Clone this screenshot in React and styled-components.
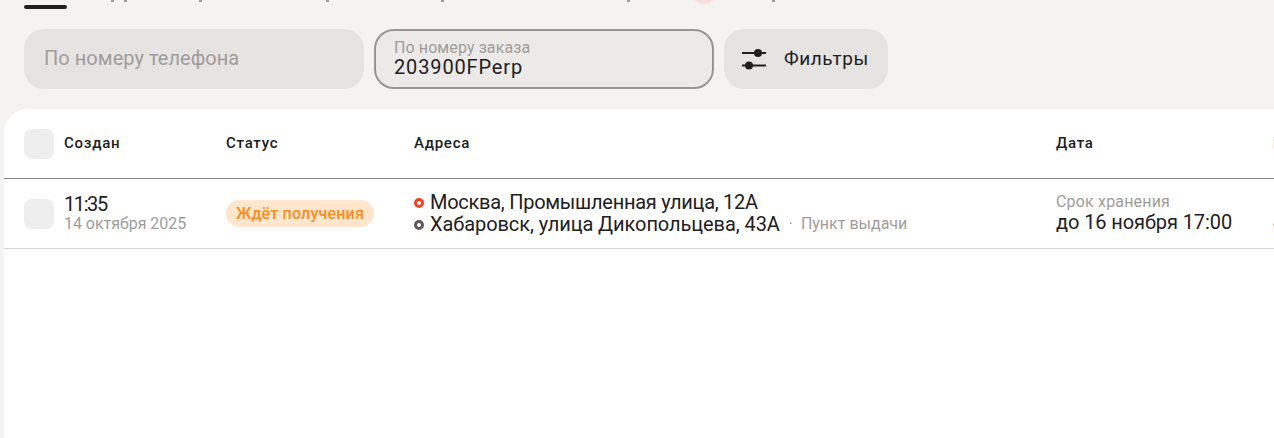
import React from "react";
import styled, { createGlobalStyle } from "styled-components";

const Global = createGlobalStyle`
  html, body { margin: 0; padding: 0; background: #f4f3f1; }
  body { font-family: Roboto, "Noto Sans", sans-serif; color: #21201f; overflow: hidden; }
  * { box-sizing: border-box; }
`;
const Page = styled.div`
  width: 1274px; height: 438px; overflow: hidden; display: flex; flex-direction: column;
`;
const TabStrip = styled.div`
  height: 29px; flex: none; display: flex; align-items: flex-start; overflow: hidden;
`;
const TabIndicator = styled.div`
  width: 43px; height: 4px; margin: 5px 0 0 24px; border-radius: 2px; background: #21201f; flex: none;
`;
const TabTick = styled.span`
  width: 3px; height: 2px; flex: none; background: #9f9c98; margin-left: ${p => p.$gap}px;
`;
const TabBadge = styled.span`
  width: 26px; height: 26px; flex: none; margin-left: ${p => p.$gap}px; margin-top: -22px; border-radius: 50%; background: #f8dcd8; filter: blur(1px);
`;
const Filters = styled.div`
  height: 60px; flex: none; display: flex; gap: 10px; padding-left: 24px;
`;
const Field = styled.div`
  width: 340px; height: 60px; border-radius: 20px; background: ${p => p.$active ? "#ebeae8" : "#e5e4e2"};
  border: ${p => p.$active ? "2px solid #979695" : "none"};
  padding-left: ${p => p.$active ? "18px" : "20px"};
  display: flex; flex-direction: column; justify-content: center;
`;
const Placeholder = styled.div`font-size: 20px; line-height: 24px; color: #a09d99; margin-top: -2px; letter-spacing: 0.04px;`;
const FieldLabel = styled.div`font-size: 16px; line-height: 16px; color: #a09d99; letter-spacing: 0.1px;`;
const FieldValue = styled.div`font-size: 20px; line-height: 22px; color: #21201f; letter-spacing: 0.86px;`;
const FilterButton = styled.div`
  width: 164px; height: 60px; border-radius: 20px; background: #e5e4e2; display: flex; align-items: center;
  padding-left: 18px; gap: 16px; font-size: 19px; color: #21201f; letter-spacing: 0.55px;
`;
const FilterLabel = styled.span`margin-top: -2px;`;
const Card = styled.div`
  flex: 1; margin: 20px 0 0 4px; background: #fff; border-radius: 24px 0 0 0; overflow: hidden;
`;
const columns = "30px 172px 188px 642px 217px 40px";
const HeadRow = styled.div`
  height: 70px; display: grid; grid-template-columns: ${columns}; padding-left: 20px; align-items: center;
  border-bottom: 1px solid #878787; font-size: 15px; font-weight: 500; white-space: nowrap; letter-spacing: 0.75px;
`;
const BodyRow = styled.div`
  height: 70px; display: grid; grid-template-columns: ${columns}; padding-left: 20px; align-items: center;
  border-bottom: 1px solid #d6d6d6; white-space: nowrap;
`;
const Check = styled.div`width: 30px; height: 30px; border-radius: 8px; background: #eeeeee;`;
const Cell = styled.div`padding-left: ${p => p.$pl || 0}px; margin-top: -1px;`;
const Primary = styled.div`font-size: 20px; line-height: 22px; letter-spacing: ${p => p.$sp || 0}px;`;
const Secondary = styled.div`font-size: 16px; line-height: 18px; color: #a09d99; letter-spacing: ${p => p.$sp ?? 0.1}px;`;
const Badge = styled.span`
  display: inline-flex; align-items: center; height: 27px; padding: 0 10px; border-radius: 14px;
  background: #ffe6cc; color: #fd8d1c; font-size: 16px; font-weight: 500; letter-spacing: 0.2px; width: 148px; margin-top: 1px;
`;
const AddressLine = styled.div`display: flex; align-items: center; font-size: 20px; line-height: 22px; letter-spacing: ${p => p.$sp}px;`;
const Dot = styled.span`
  width: 10px; height: 10px; border-radius: 50%; border: 3px solid ${p => p.$c}; margin-right: 6px; flex: none; margin-top: 1px;
`;
const Note = styled.span`font-size: 16px; color: #a09d99; margin-left: 9px; letter-spacing: 0;`;

const Sliders = () => (
  <svg width="26" height="24" viewBox="0 0 26 24" fill="none">
    <path d="M0 6h24M0 18.5h24" stroke="#21201f" strokeWidth="2" />
    <circle cx="16" cy="6" r="4" fill="#21201f" />
    <circle cx="7" cy="18.5" r="4" fill="#21201f" />
  </svg>
);

export default function App() {
  return (
    <Page>
      <Global />
      <TabStrip>
        <TabIndicator />
        <TabTick $gap={44} />
        <TabTick $gap={10} />
        <TabTick $gap={72} />
        <TabTick $gap={124} />
        <TabTick $gap={112} />
        <TabTick $gap={183} />
        <TabBadge $gap={61} />
        <TabTick $gap={55} />
      </TabStrip>
      <Filters>
        <Field><Placeholder>По номеру телефона</Placeholder></Field>
        <Field $active>
          <FieldLabel>По номеру заказа</FieldLabel>
          <FieldValue>203900FPerp</FieldValue>
        </Field>
        <FilterButton><Sliders /><FilterLabel>Фильтры</FilterLabel></FilterButton>
      </Filters>
      <Card>
        <HeadRow>
          <Check />
          <Cell $pl={10}>Создан</Cell>
          <Cell>Статус</Cell>
          <Cell>Адреса</Cell>
          <Cell>Дата</Cell>
          <Cell>Цена</Cell>
        </HeadRow>
        <BodyRow>
          <Check />
          <Cell $pl={10}>
            <Primary $sp={-1.4}>11:35</Primary>
            <Secondary $sp={-0.03}>14 октября 2025</Secondary>
          </Cell>
          <Cell><Badge>Ждёт получения</Badge></Cell>
          <Cell>
            <AddressLine $sp={-0.27}><Dot $c="#fc3f1d" />Москва, Промышленная улица, 12А</AddressLine>
            <AddressLine $sp={-0.08}><Dot $c="#5c5a57" />Хабаровск, улица Дикопольцева, 43А<Note>·&nbsp;&nbsp;Пункт выдачи</Note></AddressLine>
          </Cell>
          <Cell>
            <Secondary $sp={0.18}>Срок хранения</Secondary>
            <Primary $sp={-0.09}>до 16 ноября 17:00</Primary>
          </Cell>
          <Cell>
            <Secondary>&nbsp;</Secondary>
            <Primary>413 ₽</Primary>
          </Cell>
        </BodyRow>
      </Card>
    </Page>
  );
}
